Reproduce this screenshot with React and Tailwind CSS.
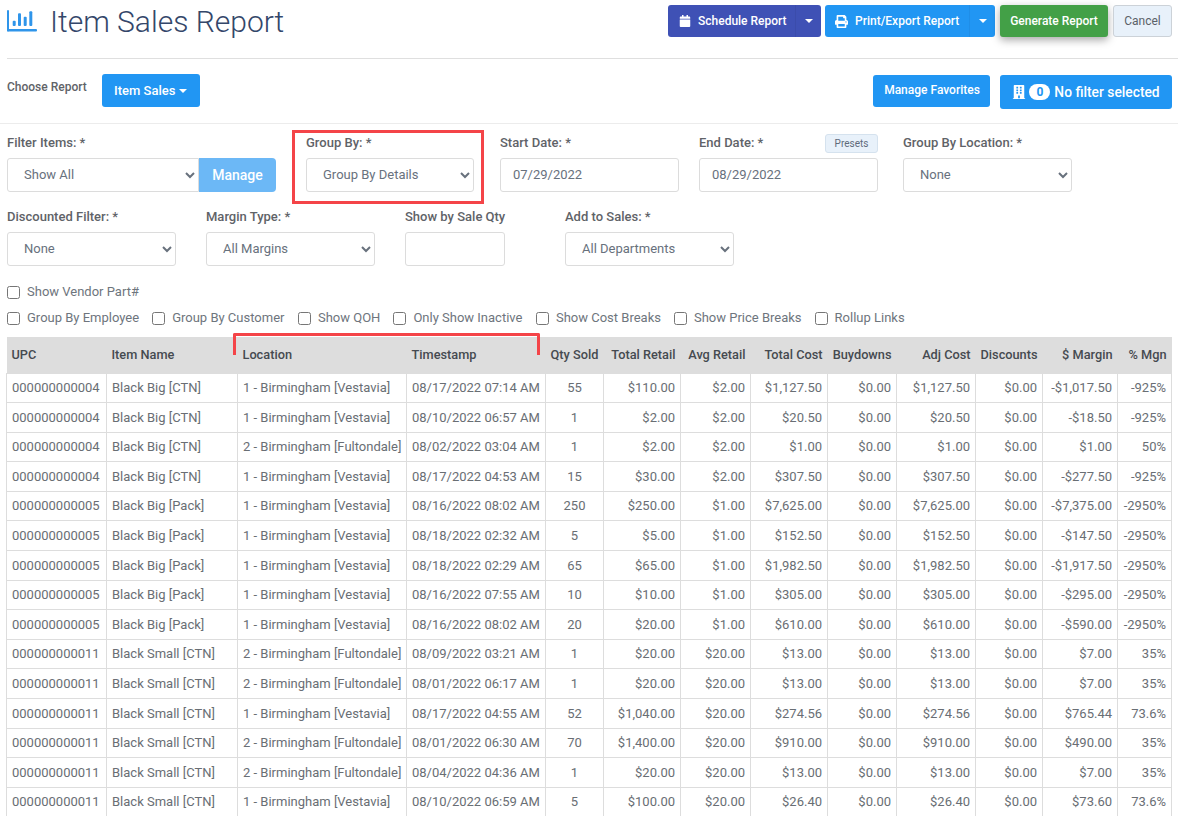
import { FaCalendar, FaPrint, FaBuilding } from 'react-icons/fa';

const COLUMNS = [
  { label: 'UPC', width: 100, align: 'left' },
  { label: 'Item Name', width: 131, align: 'left' },
  { label: 'Location', width: 169, align: 'left' },
  { label: 'Timestamp', width: 139, align: 'left' },
  { label: 'Qty Sold', width: 58, align: 'center' },
  { label: 'Total Retail', width: 77, align: 'right' },
  { label: 'Avg Retail', width: 70, align: 'right' },
  { label: 'Total Cost', width: 77, align: 'right' },
  { label: 'Buydowns', width: 69, align: 'right' },
  { label: 'Adj Cost', width: 79, align: 'right' },
  { label: 'Discounts', width: 67, align: 'right' },
  { label: '$ Margin', width: 75, align: 'right' },
  { label: '% Mgn', width: 54, align: 'right' },
];

const VEST = '1 - Birmingham [Vestavia]';
const FULT = '2 - Birmingham [Fultondale]';
const CTN = 'Black Big [CTN]';
const PACK = 'Black Big [Pack]';
const SMALL = 'Black Small [CTN]';

const ROWS = [
  ['000000000004', CTN, VEST, '08/17/2022 07:14 AM', '55', '$110.00', '$2.00', '$1,127.50', '$0.00', '$1,127.50', '$0.00', '-$1,017.50', '-925%'],
  ['000000000004', CTN, VEST, '08/10/2022 06:57 AM', '1', '$2.00', '$2.00', '$20.50', '$0.00', '$20.50', '$0.00', '-$18.50', '-925%'],
  ['000000000004', CTN, FULT, '08/02/2022 03:04 AM', '1', '$2.00', '$2.00', '$1.00', '$0.00', '$1.00', '$0.00', '$1.00', '50%'],
  ['000000000004', CTN, VEST, '08/17/2022 04:53 AM', '15', '$30.00', '$2.00', '$307.50', '$0.00', '$307.50', '$0.00', '-$277.50', '-925%'],
  ['000000000005', PACK, VEST, '08/16/2022 08:02 AM', '250', '$250.00', '$1.00', '$7,625.00', '$0.00', '$7,625.00', '$0.00', '-$7,375.00', '-2950%'],
  ['000000000005', PACK, VEST, '08/18/2022 02:32 AM', '5', '$5.00', '$1.00', '$152.50', '$0.00', '$152.50', '$0.00', '-$147.50', '-2950%'],
  ['000000000005', PACK, VEST, '08/18/2022 02:29 AM', '65', '$65.00', '$1.00', '$1,982.50', '$0.00', '$1,982.50', '$0.00', '-$1,917.50', '-2950%'],
  ['000000000005', PACK, VEST, '08/16/2022 07:55 AM', '10', '$10.00', '$1.00', '$305.00', '$0.00', '$305.00', '$0.00', '-$295.00', '-2950%'],
  ['000000000005', PACK, VEST, '08/16/2022 08:02 AM', '20', '$20.00', '$1.00', '$610.00', '$0.00', '$610.00', '$0.00', '-$590.00', '-2950%'],
  ['000000000011', SMALL, FULT, '08/09/2022 03:21 AM', '1', '$20.00', '$20.00', '$13.00', '$0.00', '$13.00', '$0.00', '$7.00', '35%'],
  ['000000000011', SMALL, FULT, '08/01/2022 06:17 AM', '1', '$20.00', '$20.00', '$13.00', '$0.00', '$13.00', '$0.00', '$7.00', '35%'],
  ['000000000011', SMALL, VEST, '08/17/2022 04:55 AM', '52', '$1,040.00', '$20.00', '$274.56', '$0.00', '$274.56', '$0.00', '$765.44', '73.6%'],
  ['000000000011', SMALL, FULT, '08/01/2022 06:30 AM', '70', '$1,400.00', '$20.00', '$910.00', '$0.00', '$910.00', '$0.00', '$490.00', '35%'],
  ['000000000011', SMALL, FULT, '08/04/2022 04:36 AM', '1', '$20.00', '$20.00', '$13.00', '$0.00', '$13.00', '$0.00', '$7.00', '35%'],
  ['000000000011', SMALL, VEST, '08/10/2022 06:59 AM', '5', '$100.00', '$20.00', '$26.40', '$0.00', '$26.40', '$0.00', '$73.60', '73.6%'],
];

const alignClass = {
  left: 'text-left',
  center: 'text-center',
  right: 'text-right',
};

function Caret() {
  return <span className="inline-block w-0 h-0 border-x-[4px] border-x-transparent border-t-[4px] border-t-white" />;
}

function Field({ label, width, children }) {
  return (
    <div className={`${width} shrink-0`}>
      <div className="h-[15px] mb-[7px] text-[13px] leading-[13px] whitespace-nowrap font-medium text-[#5f6368]">{label}</div>
      {children}
    </div>
  );
}

function Select({ value, className = 'w-full' }) {
  return (
    <select
      defaultValue={value}
      className={`${className} h-[34px] pl-3 pb-[2px] rounded-[3px] border border-[#dcdcdc] bg-white text-[13px] text-[#68717d]`}
    >
      <option>{value}</option>
    </select>
  );
}

function TextInput({ value }) {
  return (
    <input
      defaultValue={value}
      className="w-full h-[34px] px-3 pb-[2px] rounded-[3px] border border-[#dcdcdc] bg-white text-[13px] text-[#68717d]"
    />
  );
}

function Check({ label, gap = 'mr-[13px]' }) {
  return (
    <label className={`flex items-center ${gap}`}>
      <input type="checkbox" className="w-[13px] h-[13px] mt-[3px] mr-[7px]" />
      <span className="text-[13px] leading-[15px] text-[#6e757d]">{label}</span>
    </label>
  );
}

export default function App() {
  return (
    <div className="w-[1178px] h-[816px] overflow-hidden bg-white font-['Roboto',sans-serif]">
      {/* Title bar */}
      <div className="ml-[7px] h-[59px] flex justify-between border-b border-[#dfdfdf]">
        <div className="flex items-start">
          <svg width="30" height="22" viewBox="0 0 30 22" className="mt-[10px] text-[#2f95ea]" fill="currentColor">
            <rect x="0" y="0" width="2" height="21.5" rx="1" />
            <rect x="0" y="19" width="30" height="2.5" rx="1" />
            <rect x="5.7" y="10.7" width="3" height="5.3" rx="1" />
            <rect x="11" y="3.3" width="3" height="12.7" rx="1" />
            <rect x="16.7" y="6.7" width="3" height="9.3" rx="1" />
            <rect x="22.3" y="1.3" width="3" height="14.7" rx="1" />
          </svg>
          <h1 className="ml-[13px] mt-[2px] text-[30px] leading-[40px] font-light text-[#34476a]">Item Sales Report</h1>
        </div>
        <div className="flex items-start mt-[5px] mr-[6px] text-white text-[12px] font-medium">
          <div className="flex h-[32px] w-[153px] rounded-[3px] bg-[#3f51b5]">
            <div className="flex-1 flex items-center pl-[11px]">
              <FaCalendar size={12} />
              <span className="ml-[7px]">Schedule Report</span>
            </div>
            <div className="w-[26px] flex items-center justify-center border-l border-[#3b4cab]"><Caret /></div>
          </div>
          <div className="ml-[4px] flex h-[32px] w-[170px] rounded-[3px] bg-[#2196f3]">
            <div className="flex-1 flex items-center pl-[10px]">
              <FaPrint size={13} />
              <span className="ml-[7px]">Print/Export Report</span>
            </div>
            <div className="w-[26px] flex items-center justify-center border-l border-[#1f8ee8]"><Caret /></div>
          </div>
          <button className="ml-[5px] h-[32px] w-[108px] rounded-[3px] bg-[#43a047] shadow-[0_3px_8px_rgba(0,0,0,0.35)]">Generate Report</button>
          <button className="ml-[5px] h-[32px] w-[59px] rounded-[3px] border border-[#ccd2d8] bg-[#e8f1fa] font-normal text-[#5b6168]">Cancel</button>
        </div>
      </div>

      {/* Report chooser */}
      <div className="h-[65px] pl-[7px] pr-[6px] flex justify-between border-b border-[#ececec]">
        <div className="flex items-start">
          <span className="mt-[21px] text-[12px] leading-[15px] font-medium text-[#5f6368]">Choose Report</span>
          <button className="ml-[15px] mt-[15px] h-[33px] w-[98px] flex items-center justify-center gap-[4px] rounded-[3px] bg-[#2196f3] text-[13px] font-medium text-white">
            Item Sales <Caret />
          </button>
        </div>
        <div className="flex items-start mt-[16px] text-white">
          <button className="h-[32px] w-[117px] pb-[2px] pl-[1px] rounded-[3px] bg-[#2196f3] text-[12px] font-medium">Manage Favorites</button>
          <button className="ml-[10px] h-[34px] w-[172px] flex items-center justify-center rounded-[3px] bg-[#2196f3] text-[13.8px] font-medium">
            <FaBuilding size={14} />
            <span className="ml-[3px] w-[21px] h-[16px] rounded-full bg-white text-[#2196f3] text-[12px] leading-[16px] font-bold">0</span>
            <span className="ml-[4px]">No filter selected</span>
          </button>
        </div>
      </div>

      {/* Filters */}
      <div className="pl-[7px] pt-[12px] flex">
        <Field label="Filter Items: *" width="w-[269px]">
          <div className="flex">
            <Select value="Show All" className="w-[192px] rounded-r-none" />
            <div className="w-[77px] h-[34px] flex items-center justify-center rounded-r-[4px] bg-[#6cb8f6] text-[14px] font-medium text-white">Manage</div>
          </div>
        </Field>
        <div className="relative ml-[30px]">
          <Field label="Group By: *" width="w-[168px]">
            <Select value="Group By Details" />
          </Field>
          <div className="absolute left-[-14px] top-[-6px] w-[192px] h-[74px] border-[3px] border-[#f44448] pointer-events-none" />
        </div>
        <div className="ml-[26px]">
          <Field label="Start Date: *" width="w-[179px]">
            <TextInput value="07/29/2022" />
          </Field>
        </div>
        <div className="relative ml-[20px]">
          <Field label="End Date: *" width="w-[179px]">
            <TextInput value="08/29/2022" />
          </Field>
          <span className="absolute right-0 top-[-2px] w-[53px] h-[19px] flex items-center justify-center rounded-[3px] border border-[#d5e2ee] bg-[#e8f1fa] text-[10px] text-[#5f6b7a]">Presets</span>
        </div>
        <div className="ml-[25px]">
          <Field label="Group By Location: *" width="w-[169px]">
            <Select value="None" />
          </Field>
        </div>
      </div>
      <div className="pl-[7px] pt-[18px] flex">
        <Field label="Discounted Filter: *" width="w-[169px]">
          <Select value="None" />
        </Field>
        <div className="ml-[30px]">
          <Field label="Margin Type: *" width="w-[169px]">
            <Select value="All Margins" />
          </Field>
        </div>
        <div className="ml-[30px]">
          <Field label="Show by Sale Qty" width="w-[100px]">
            <TextInput value="" />
          </Field>
        </div>
        <div className="ml-[60px]">
          <Field label="Add to Sales: *" width="w-[169px]">
            <Select value="All Departments" />
          </Field>
        </div>
      </div>

      {/* Checkboxes */}
      <div className="pl-[7px] mt-[17px]">
        <Check label="Show Vendor Part#" />
      </div>
      <div className="pl-[7px] mt-[10px] flex">
        <Check label="Group By Employee" />
        <Check label="Group By Customer" gap="mr-[13.5px]" />
        <Check label="Show QOH" />
        <Check label="Only Show Inactive" gap="mr-[13.5px]" />
        <Check label="Show Cost Breaks" />
        <Check label="Show Price Breaks" />
        <Check label="Rollup Links" />
      </div>

      {/* Results */}
      <div className="relative mt-[12px] ml-[6px]">
        <div className="absolute left-[227px] top-[-4px] w-[307px] h-[22px] rounded-t-[2px] border-[3px] border-b-0 border-[#f44448] pointer-events-none" />
        <table className="w-[1165px] table-fixed border-collapse text-[13px]">
          <colgroup>
            {COLUMNS.map(c => <col key={c.label} style={{ width: c.width }} />)}
          </colgroup>
          <thead>
            <tr className="h-[36px] bg-[#dddddd]">
              {COLUMNS.map(c => (
                <th key={c.label} className={`px-[5px] whitespace-nowrap font-medium text-[12.75px] text-[#454a50] ${c.align === 'center' ? 'text-left' : alignClass[c.align]}`}>
                  {c.label}
                </th>
              ))}
            </tr>
          </thead>
          <tbody>
            {ROWS.map((row, i) => (
              <tr key={i} className="h-[29.6px]">
                {row.map((val, j) => (
                  <td key={j} className={`px-[5px] whitespace-nowrap border border-[#dddddd] text-[#696e74] ${alignClass[COLUMNS[j].align]}`}>
                    {val}
                  </td>
                ))}
              </tr>
            ))}
          </tbody>
        </table>
      </div>
    </div>
  );
}
